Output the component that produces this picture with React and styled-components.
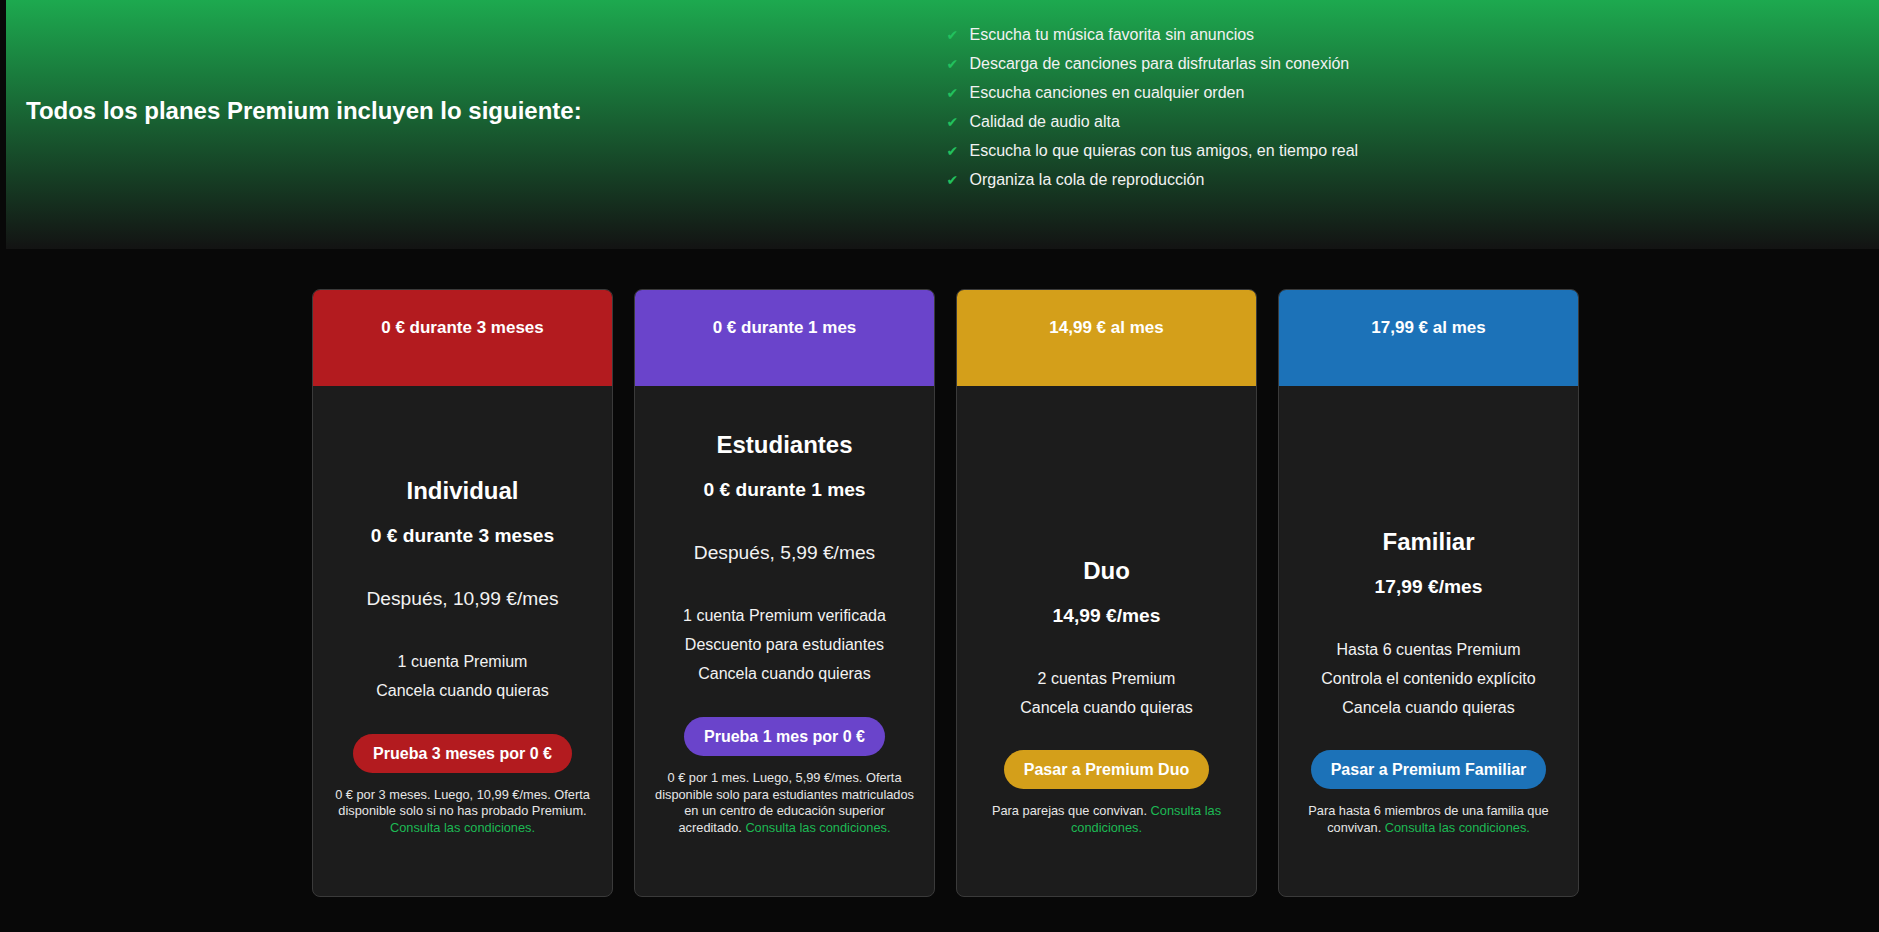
import React from "react";
import styled, { createGlobalStyle } from "styled-components";

const GlobalStyle = createGlobalStyle`
  html, body {
    margin: 0;
    padding: 0;
    background: #080808;
  }
  body {
    font-family: "Liberation Sans", Arial, sans-serif;
    color: #ffffff;
  }
  * { box-sizing: border-box; }
`;

const Hero = styled.section`
  margin-left: 6px;
  height: 249px;
  padding: 20px 20px 55px;
  background: linear-gradient(to bottom, #1da94f 0%, #131313 100%);
  display: grid;
  grid-template-columns: 1fr 1fr;
  align-items: center;
`;

const HeroTitle = styled.h2`
  margin: 8px 0 0;
  font-size: 24px;
  font-weight: 700;
  line-height: normal;
  color: #ffffff;
`;

const BenefitList = styled.ul`
  list-style: none;
  margin: 0;
  padding: 0 0 0 4px;
`;

const Benefit = styled.li`
  display: flex;
  align-items: center;
  font-size: 16px;
  line-height: 29px;
  color: #f2f2f2;
`;

const Check = styled.span`
  font-family: "DejaVu Sans", sans-serif;
  font-size: 14px;
  color: #22c15e;
  width: 11px;
  margin-right: 12px;
  line-height: 1;
`;

const Plans = styled.main`
  display: flex;
  justify-content: center;
  gap: 21px;
  padding: 40px 0 0 12px;
`;

const Card = styled.article`
  width: 301px;
  height: 608px;
  background: #1c1c1c;
  border: 1px solid #3a3a3a;
  border-radius: 8px;
  overflow: hidden;
  display: flex;
  flex-direction: column;
`;

const CardHeader = styled.header`
  height: 96px;
  padding-top: 28px;
  background: ${(p) => p.$color};
  text-align: center;
  font-size: 17px;
  font-weight: 700;
  line-height: normal;
  color: #ffffff;
`;

const CardBody = styled.div`
  flex: 1;
  display: flex;
  flex-direction: column;
  align-items: center;
  justify-content: flex-end;
  padding: 0 18px 59px;
  text-align: center;
`;

const PlanName = styled.h3`
  margin: 0;
  font-size: 24px;
  font-weight: 700;
  line-height: 28px;
  color: #ffffff;
`;

const Price = styled.p`
  margin: 20px 0 0;
  font-size: 19.2px;
  font-weight: 700;
  line-height: 22px;
  color: #ffffff;
`;

const After = styled.p`
  margin: 41px 0 0;
  font-size: 19.2px;
  font-weight: 400;
  line-height: 22px;
  color: #f2f2f2;
`;

const Features = styled.ul`
  list-style: none;
  margin: 38px 0 0;
  padding: 0;
`;

const Feature = styled.li`
  font-size: 16px;
  line-height: 28.8px;
  color: #f2f2f2;
`;

const CtaButton = styled.button`
  margin-top: 28px;
  padding: 10px 20px;
  border: none;
  border-radius: 999px;
  background: ${(p) => p.$color};
  color: #ffffff;
  font-family: "Liberation Sans", Arial, sans-serif;
  font-size: 16px;
  font-weight: 700;
  line-height: 19px;
  cursor: pointer;
`;

const FinePrint = styled.p`
  margin: 14px 0 0;
  font-size: 12.8px;
  line-height: 16.8px;
  color: #e6e6e6;
`;

const TermsLink = styled.a`
  color: #1db954;
  text-decoration: none;
`;

const benefits = [
  "Escucha tu música favorita sin anuncios",
  "Descarga de canciones para disfrutarlas sin conexión",
  "Escucha canciones en cualquier orden",
  "Calidad de audio alta",
  "Escucha lo que quieras con tus amigos, en tiempo real",
  "Organiza la cola de reproducción",
];

const plans = [
  {
    color: "#b31b1f",
    header: "0 € durante 3 meses",
    name: "Individual",
    price: "0 € durante 3 meses",
    after: "Después, 10,99 €/mes",
    features: ["1 cuenta Premium", "Cancela cuando quieras"],
    cta: "Prueba 3 meses por 0 €",
    fine: "0 € por 3 meses. Luego, 10,99 €/mes. Oferta disponible solo si no has probado Premium.",
  },
  {
    color: "#6a44cb",
    header: "0 € durante 1 mes",
    name: "Estudiantes",
    price: "0 € durante 1 mes",
    after: "Después, 5,99 €/mes",
    features: [
      "1 cuenta Premium verificada",
      "Descuento para estudiantes",
      "Cancela cuando quieras",
    ],
    cta: "Prueba 1 mes por 0 €",
    fine: "0 € por 1 mes. Luego, 5,99 €/mes. Oferta disponible solo para estudiantes matriculados en un centro de educación superior acreditado.",
  },
  {
    color: "#d49f1a",
    header: "14,99 € al mes",
    name: "Duo",
    price: "14,99 €/mes",
    features: ["2 cuentas Premium", "Cancela cuando quieras"],
    cta: "Pasar a Premium Duo",
    fine: "Para parejas que convivan.",
  },
  {
    color: "#1c72b8",
    header: "17,99 € al mes",
    name: "Familiar",
    price: "17,99 €/mes",
    features: [
      "Hasta 6 cuentas Premium",
      "Controla el contenido explícito",
      "Cancela cuando quieras",
    ],
    cta: "Pasar a Premium Familiar",
    fine: "Para hasta 6 miembros de una familia que convivan.",
  },
];

export default function App() {
  return (
    <>
      <GlobalStyle />
      <Hero>
        <HeroTitle>Todos los planes Premium incluyen lo siguiente:</HeroTitle>
        <BenefitList>
          {benefits.map((b) => (
            <Benefit key={b}>
              <Check>✔</Check>
              {b}
            </Benefit>
          ))}
        </BenefitList>
      </Hero>
      <Plans>
        {plans.map((p) => (
          <Card key={p.name}>
            <CardHeader $color={p.color}>{p.header}</CardHeader>
            <CardBody>
              <PlanName>{p.name}</PlanName>
              <Price>{p.price}</Price>
              {p.after && <After>{p.after}</After>}
              <Features>
                {p.features.map((f) => (
                  <Feature key={f}>{f}</Feature>
                ))}
              </Features>
              <CtaButton $color={p.color}>{p.cta}</CtaButton>
              <FinePrint>
                {p.fine} <TermsLink href="#">Consulta las condiciones.</TermsLink>
              </FinePrint>
            </CardBody>
          </Card>
        ))}
      </Plans>
    </>
  );
}
